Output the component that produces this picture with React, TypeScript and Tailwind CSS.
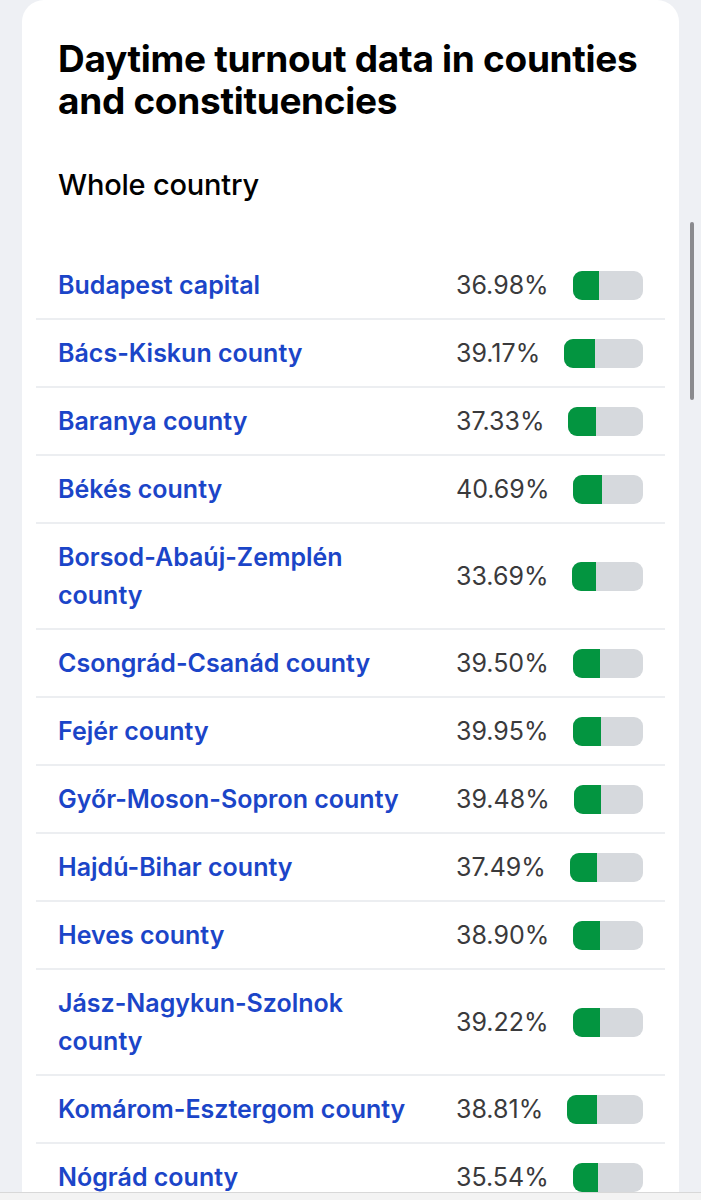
import React from "react";

const rows: { name: string; pct: string }[] = [
  { name: "Budapest capital", pct: "36.98" },
  { name: "Bács-Kiskun county", pct: "39.17" },
  { name: "Baranya county", pct: "37.33" },
  { name: "Békés county", pct: "40.69" },
  { name: "Borsod-Abaúj-Zemplén county", pct: "33.69" },
  { name: "Csongrád-Csanád county", pct: "39.50" },
  { name: "Fejér county", pct: "39.95" },
  { name: "Győr-Moson-Sopron county", pct: "39.48" },
  { name: "Hajdú-Bihar county", pct: "37.49" },
  { name: "Heves county", pct: "38.90" },
  { name: "Jász-Nagykun-Szolnok county", pct: "39.22" },
  { name: "Komárom-Esztergom county", pct: "38.81" },
  { name: "Nógrád county", pct: "35.54" },
];

export default function App() {
  return (
    <div
      className="relative h-[1200px] w-[701px] overflow-hidden bg-[#eef0f4]"
      style={{ fontFamily: "Inter, 'Noto Sans', sans-serif" }}
    >
      <div className="mx-[22px] min-h-[1300px] rounded-t-[22px] bg-white pt-[38px]">
        <h1 className="px-[36px] text-[37px] font-bold leading-[42px] tracking-[-0.3px] text-black">
          Daytime turnout data in counties and constituencies
        </h1>
        <h2 className="mt-[45px] px-[36px] text-[29px] font-medium leading-[36px] tracking-[-0.2px] text-black">
          Whole country
        </h2>
        <div className="mt-[49px] mx-[14px]">
          {rows.map((r, i) => (
            <div
              key={r.name}
              className={`flex items-center py-[14px] pl-[22px] ${
                i < rows.length - 1 ? "border-b-2 border-[#eceef1]" : ""
              }`}
            >
              <div className="w-[398px] shrink-0 pr-[36px] text-[25px] font-semibold leading-[38px] text-[#1b45c8]">
                {r.name}
              </div>
              <div className="flex w-[187px] shrink-0 items-center gap-[24px]">
                <span className="text-[25px] leading-[38px] text-[#3a3a3c]">
                  {r.pct}%
                </span>
                <div className="flex h-[29px] flex-1 overflow-hidden rounded-[9px] bg-[#d6d9dd]">
                  <div
                    className="h-full bg-[#039540]"
                    style={{ width: `${parseFloat(r.pct)}%` }}
                  />
                </div>
              </div>
            </div>
          ))}
        </div>
      </div>
      <div className="absolute right-[7px] top-[222px] h-[178px] w-[4px] rounded-full bg-[#8a8a8e]" />
      <div className="absolute bottom-0 left-0 h-[8px] w-full border-t border-[#d8d8d8] bg-[#f3f3f3]" />
    </div>
  );
}
